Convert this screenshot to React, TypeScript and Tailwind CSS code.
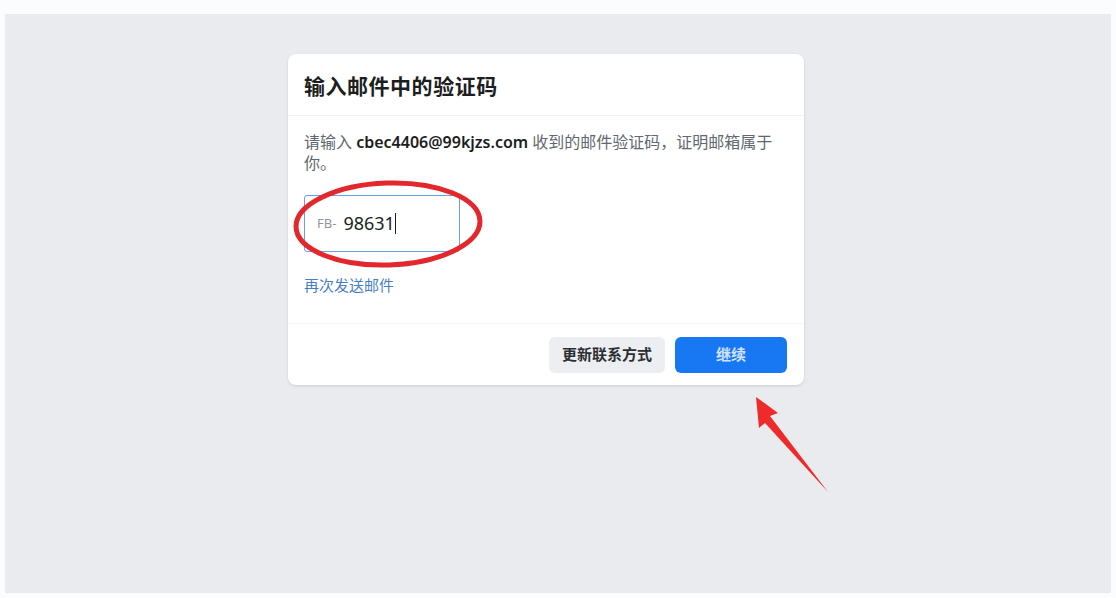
import React from 'react'

const font = { fontFamily: '"Noto Sans", "Noto Sans CJK SC", sans-serif' }

const App = () => {
    return (
        <div className="w-[1116px] h-[598px] bg-[#fbfcfd] pl-[5px] pr-[5px] pt-[14px] pb-[5px]" style={font}>
            <div className="relative w-full h-full bg-[#e9ebee] flex justify-center pt-[40px]">
                <div className="w-[516px] h-[331px] ml-[-24px] bg-white rounded-lg shadow-[0_1px_3px_rgba(0,0,0,0.12)] flex flex-col">
                    <div className="h-[62px] flex items-center px-4 pt-[4px] border-b border-[#eef0f3]">
                        <h1 className="text-[21px] font-bold text-[#1c1e21] tracking-wide">输入邮件中的验证码</h1>
                    </div>
                    <div className="px-4 pt-[16px] flex-1">
                        <p className="text-[16px] leading-[21px] text-[#606770]">
                            请输入 <span className="font-semibold text-[#1c1e21]">cbec4406@99kjzs.com</span> 收到的邮件验证码，证明邮箱属于你。
                        </p>
                        <div className="mt-[21px] w-[156px] h-[57px] border border-[#6d9de8] rounded-[3px] flex items-center px-3 gap-[7px]">
                            <span className="text-[13px] text-[#90949c]">FB-</span>
                            <span className="text-[18px] text-[#1c1e21]">98631</span>
                            <span className="w-px h-[21px] bg-[#1c1e21] -ml-[7px]"></span>
                        </div>
                        <a className="block mt-[22px] text-[15px] text-[#4a7ec4]">再次发送邮件</a>
                    </div>
                    <div className="border-t border-[#f5f6f7] h-[62px] flex items-center justify-end gap-[10px] pl-4 pr-[17px]">
                        <button className="h-[36px] w-[116px] rounded-md bg-[#eceef1] text-[15px] font-bold text-[#2a2d31]">更新联系方式</button>
                        <button className="h-[36px] w-[112px] rounded-md bg-[#1877f2] text-[15px] font-bold text-white/80">继续</button>
                    </div>
                </div>
                <svg className="absolute left-0 top-0 pointer-events-none" width="1106" height="579" viewBox="0 0 1106 579">
                    <ellipse cx="383" cy="210" rx="92" ry="41" fill="none" stroke="#e3282d" strokeWidth="5" transform="rotate(-2 383 210)" />
                    <path d="M751 383 L773 399 L765 402 L823 478 L760 409 L754 414 Z" fill="#ee2a2a" />
                </svg>
            </div>
        </div>
    )
}

export default App
